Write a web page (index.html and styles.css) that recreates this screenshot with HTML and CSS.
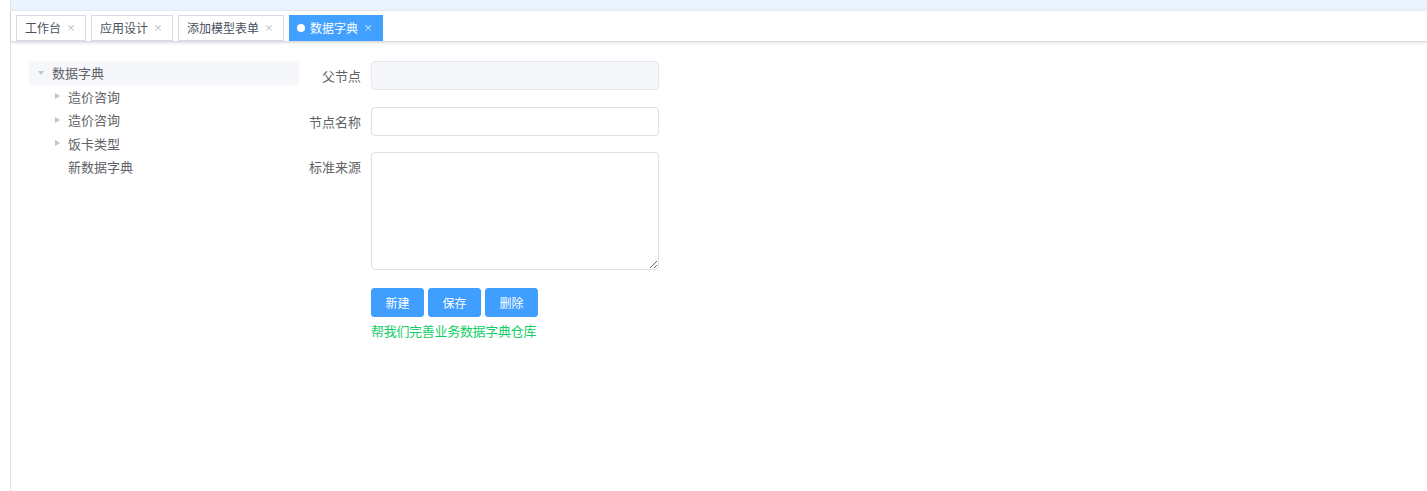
FILE: index.html
```html
<!DOCTYPE html>
<html lang="zh-CN">
<head>
<meta charset="utf-8">
<title>数据字典</title>
<link rel="stylesheet" href="styles.css">
</head>
<body>
<div class="app">
  <aside class="sidebar"></aside>
  <div class="main">
    <div class="topband"></div>
    <nav class="tags">
      <span class="tag">工作台<span class="close">×</span></span>
      <span class="tag">应用设计<span class="close">×</span></span>
      <span class="tag">添加模型表单<span class="close">×</span></span>
      <span class="tag active"><span class="dot"></span>数据字典<span class="close">×</span></span>
    </nav>
    <div class="content">
      <div class="tree">
        <div class="node root current"><span class="caret"><i class="tri-down"></i></span>数据字典</div>
        <div class="node child"><span class="caret"><i class="tri-right"></i></span>造价咨询</div>
        <div class="node child"><span class="caret"><i class="tri-right"></i></span>造价咨询</div>
        <div class="node child"><span class="caret"><i class="tri-right"></i></span>饭卡类型</div>
        <div class="node child"><span class="caret"></span>新数据字典</div>
      </div>
      <form class="form">
        <div class="item">
          <label class="label">父节点</label>
          <input class="input" type="text" disabled>
        </div>
        <div class="item gap2">
          <label class="label">节点名称</label>
          <input class="input" type="text">
        </div>
        <div class="item gap3">
          <label class="label">标准来源</label>
          <textarea class="textarea"></textarea>
        </div>
        <div class="item gap4">
          <span class="label"></span>
          <div class="actions">
            <div class="buttons">
              <button type="button" class="btn">新建</button>
              <button type="button" class="btn">保存</button>
              <button type="button" class="btn">删除</button>
            </div>
            <div class="hint">帮我们完善业务数据字典仓库</div>
          </div>
        </div>
      </form>
    </div>
  </div>
</div>
</body>
</html>
```

FILE: styles.css
```css
* { box-sizing: border-box; }
html, body { margin: 0; padding: 0; height: 100%; }
body {
  font-family: "Noto Sans CJK SC", "Noto Sans", "Liberation Sans", sans-serif;
  color: #606266;
  background: #fff;
}
.app { display: flex; height: 491px; overflow: hidden; }
.sidebar { width: 11px; flex: 0 0 11px; border-right: 1px solid #e4e4e4; background: #fff; }
.main { flex: 1; display: flex; flex-direction: column; min-width: 0; }
.topband { height: 11px; background: #ebf3fe; }
.tags {
  height: 31px;
  padding-top: 4px;
  background: #fff;
  border-bottom: 1px solid #d8dce5;
  box-shadow: 0 1px 3px 0 rgba(0,0,0,.12), 0 0 3px 0 rgba(0,0,0,.04);
  display: flex;
  align-items: flex-start;
  position: relative;
  z-index: 1;
}
.tag {
  display: flex;
  align-items: center;
  height: 26px;
  line-height: 26px;
  border: 1px solid #d8dce5;
  color: #495060;
  background: #fff;
  padding: 0 8px;
  font-size: 12px;
  margin-left: 5px;
}
.tag.active { background: #42a0ff; border-color: #42a0ff; color: #fff; }
.dot { width: 8px; height: 8px; border-radius: 50%; background: #fff; margin-right: 5px; margin-left: -1px; }
.close {
  width: 16px;
  text-align: center;
  font-size: 9px;
  color: #a8acb5;
  margin-left: 2px;
  margin-right: -2px;
}
.tag.active .close { color: #e6f0ff; }
.content { display: flex; align-items: flex-start; padding: 19px 0 0 18px; }
.tree { width: 270px; font-size: 13px; }
.node { display: flex; align-items: center; height: 23.5px; white-space: nowrap; }
.node.current { background: #f5f7fa; }
.node.root { padding-left: 9px; }
.node.child { padding-left: 26px; }
.caret { width: 14px; display: flex; align-items: center; }
.node.child .caret { width: 13px; }
.tri-down {
  display: block; width: 0; height: 0;
  border-left: 3.5px solid transparent;
  border-right: 3.5px solid transparent;
  border-top: 4px solid #c0c4cc;
}
.tri-right {
  display: block; width: 0; height: 0;
  border-top: 3.5px solid transparent;
  border-bottom: 3.5px solid transparent;
  border-left: 5px solid #c0c4cc;
}
.form { display: flex; flex-direction: column; font-size: 13px; }
.item { display: flex; align-items: flex-start; }
.gap2 { margin-top: 17px; }
.gap3 { margin-top: 16px; }
.gap4 { margin-top: 18px; }
.label { width: 72px; padding-right: 10px; text-align: right; line-height: 29px; color: #606266; }
.input {
  width: 288px; height: 29px;
  border: 1px solid #dcdfe6; border-radius: 4px;
  background: #fff; padding: 0 10px; font: inherit; outline: none;
}
.input:disabled { background: #f5f7fa; border-color: #e4e7ed; }
.textarea {
  width: 288px; height: 118px;
  border: 1px solid #dcdfe6; border-radius: 4px;
  padding: 5px 10px; font: inherit; outline: none; margin: 0; display: block;
}
.buttons { display: flex; gap: 4px; }
.btn {
  width: 53px; height: 29px;
  border: 1px solid #409eff; background: #409eff; color: #fff;
  border-radius: 3px; font: inherit; font-size: 12px; padding: 0; cursor: pointer;
}
.hint { margin-top: 4px; line-height: 20px; color: #13ce66; font-size: 13px; letter-spacing: -0.3px; }
```
